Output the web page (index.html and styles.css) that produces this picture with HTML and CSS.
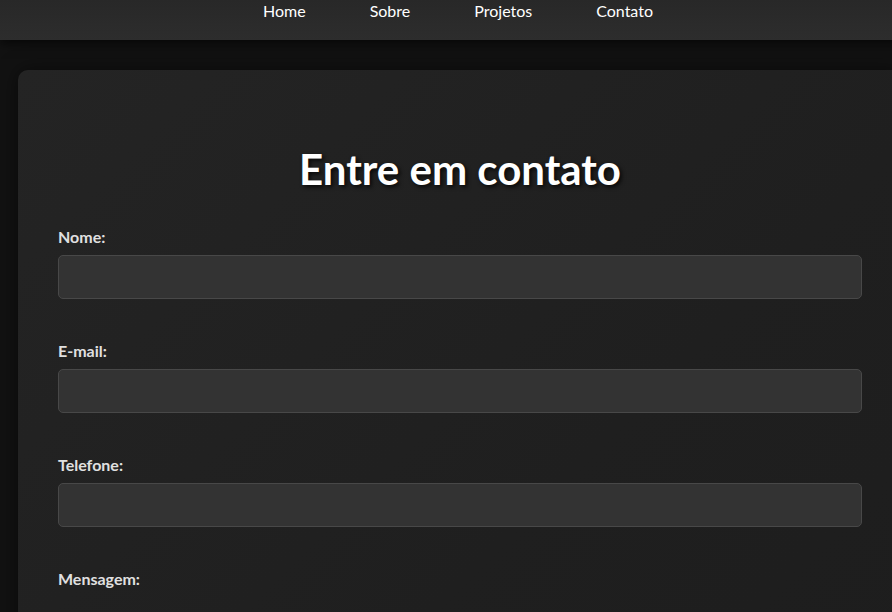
FILE: index.html
```html
<!DOCTYPE html>
<html lang="pt">
<head>
<meta charset="utf-8">
<title>Contato</title>
<link rel="stylesheet" href="styles.css">
</head>
<body>
<div class="page">
  <header class="topbar">
    <nav class="nav">
      <a href="#" class="nav-link">Home</a>
      <a href="#" class="nav-link">Sobre</a>
      <a href="#" class="nav-link">Projetos</a>
      <a href="#" class="nav-link">Contato</a>
    </nav>
  </header>
  <main class="card">
    <h1 class="title">Entre em contato</h1>
    <form class="form">
      <div class="field">
        <label class="label" for="nome">Nome:</label>
        <input class="input" type="text" id="nome">
      </div>
      <div class="field">
        <label class="label" for="email">E-mail:</label>
        <input class="input" type="email" id="email">
      </div>
      <div class="field">
        <label class="label" for="tel">Telefone:</label>
        <input class="input" type="tel" id="tel">
      </div>
      <div class="field">
        <label class="label" for="msg">Mensagem:</label>
        <textarea class="input textarea" id="msg"></textarea>
      </div>
    </form>
  </main>
</div>
</body>
</html>
```

FILE: styles.css
```css
* { box-sizing: border-box; }
html, body {
  margin: 0;
  padding: 0;
  overflow: hidden;
  background: #121212;
}
body {
  font-family: Lato, "Open Sans", sans-serif;
  color: #fff;
}
.page {
  width: 916px;
  height: 612px;
  overflow: hidden;
}
.topbar {
  height: 40px;
  background: linear-gradient(180deg, #282828 0%, #2d2d2d 100%);
  box-shadow: 0 4px 10px rgba(0,0,0,0.6);
  position: relative;
  z-index: 1;
}
.nav {
  display: flex;
  justify-content: center;
  gap: 64px;
}
.nav-link {
  color: #fff;
  text-decoration: none;
  font-size: 16px;
  line-height: 21px;
}
.card {
  margin: 30px 0 0 18px;
  width: 884px;
  padding: 75px 40px 40px;
  border-radius: 10px;
  background: linear-gradient(135deg, #242424 0%, #1f1f1f 60%, #1d1d1d 100%);
  box-shadow: 0 0 20px rgba(0,0,0,0.5);
}
.title {
  margin: 0 0 34px;
  text-align: center;
  font-size: 42px;
  font-weight: 700;
  line-height: 48px;
  color: #fff;
  text-shadow: 2px 2px 4px rgba(0,0,0,0.8);
}
.form {
  display: flex;
  flex-direction: column;
  gap: 42px;
}
.field {
  display: flex;
  flex-direction: column;
  gap: 8px;
}
.label {
  font-size: 16px;
  font-weight: 700;
  line-height: 20px;
  color: #e0e0e0;
}
.input {
  height: 44px;
  width: 100%;
  background: #333;
  border: 1px solid #484848;
  border-radius: 5px;
  color: #fff;
  font: inherit;
  padding: 8px 10px;
}
.textarea {
  margin-top: 20px;
  height: 120px;
  resize: none;
}
```
